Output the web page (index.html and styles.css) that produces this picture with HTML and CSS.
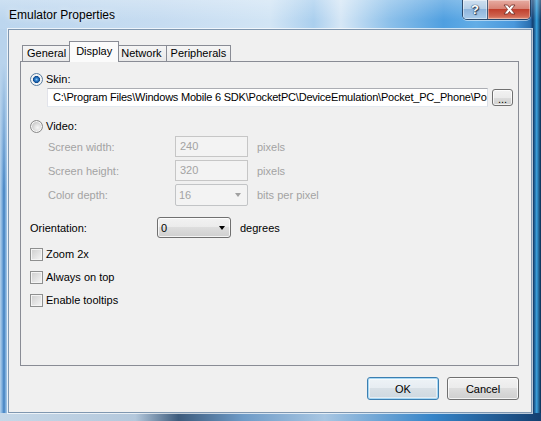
FILE: index.html
```html
<!DOCTYPE html>
<html>
<head>
<meta charset="utf-8">
<title>Emulator Properties</title>
<link rel="stylesheet" href="styles.css">
</head>
<body>
<div class="window">
  <div class="titlebar">
    <span class="title">Emulator Properties</span>
    <div class="caption">
      <span class="cap-help">?</span>
      <span class="cap-close">
        <svg width="13" height="11" viewBox="0 0 13 11"><path d="M1,1 H4.6 L6.5,3.5 L8.4,1 H12 L8.4,5.5 L12,10 H8.4 L6.5,7.5 L4.6,10 H1 L4.6,5.5 Z" fill="#fff" stroke="#6b2a22" stroke-width="0.8" stroke-linejoin="round"/></svg>
      </span>
    </div>
  </div>
  <div class="client">
    <div class="tabs">
      <span class="tab">General</span>
      <span class="tab active">Display</span>
      <span class="tab">Network</span>
      <span class="tab">Peripherals</span>
    </div>
    <div class="panel">
      <div class="row r-skin"><span class="radio checked"></span><span>Skin:</span></div>
      <div class="row r-path">
        <div class="textbox path">C:\Program Files\Windows Mobile 6 SDK\PocketPC\DeviceEmulation\Pocket_PC_Phone\Po</div>
        <span class="btn browse">...</span>
      </div>
      <div class="row r-video"><span class="radio"></span><span>Video:</span></div>
      <div class="row r-field disabled"><span class="lbl">Screen width:</span><span class="dbox">240</span><span class="unit">pixels</span></div>
      <div class="row r-field disabled"><span class="lbl">Screen height:</span><span class="dbox">320</span><span class="unit">pixels</span></div>
      <div class="row r-field disabled"><span class="lbl">Color depth:</span><span class="dcombo">16<span class="arrow grey"></span></span><span class="unit">bits per pixel</span></div>
      <div class="row r-orient"><span class="lbl">Orientation:</span><span class="combo">0<span class="arrow"></span></span><span class="unit">degrees</span></div>
      <div class="row r-check first"><span class="check"></span><span>Zoom 2x</span></div>
      <div class="row r-check"><span class="check"></span><span>Always on top</span></div>
      <div class="row r-check"><span class="check"></span><span>Enable tooltips</span></div>
    </div>
    <div class="buttons">
      <span class="btn dlg default">OK</span>
      <span class="btn dlg">Cancel</span>
    </div>
  </div>
</div>
</body>
</html>
```
FILE: styles.css
```css
* { box-sizing: border-box; }
html, body { margin: 0; padding: 0; }
body {
  width: 541px;
  height: 421px;
  overflow: hidden;
  font-family: "Liberation Sans", Arial, sans-serif;
  font-size: 11px;
  color: #000;
  background: #1d4e80;
}

.window {
  width: 541px;
  height: 421px;
  display: flex;
  flex-direction: column;
  background:
    linear-gradient(90deg, #c6d8e8 0%, #b4c8dc 25%, #3d5b7c 33%, #6f9cc8 45%, #a8c6e2 60%, #3584c8 80%, #143f70 100%) left bottom / 100% 8px no-repeat,
    linear-gradient(180deg, #b8d3ec 0%, #b8d3ec 15%, rgba(184,211,236,0) 45%) left top / 8px 100% no-repeat,
    linear-gradient(90deg, #b3d0eb 0px, #7fb0de 2px, #3f7fc0 4px, #8bb8e2 6px, #bcd6ee 8px, #bcd6ee 60%, #5ea6e0 90%, #2d78bc 98%, #0e3261 98.5%, #3aa0dc 99.2%, #0c2a50 100%);
}

/* title bar */
.titlebar {
  height: 29px;
  display: flex;
  align-items: flex-start;
  padding: 0 10px 0 9px;
  background:
    linear-gradient(180deg, rgba(255,255,255,0.25), rgba(255,255,255,0) 70%),
    linear-gradient(90deg, #bcd6ee 0%, #c6dcf1 30%, #d2e5f5 50%, #aacfee 58%, #d6e7f6 63%, #8cc0ea 72%, #4f9fe0 82%, #63ade6 88%, #4a98dc 95%, #2a6fb0 98%, #123d6e 98.5%, #34a0dc 99.2%, #0f2f58 100%);
}
.title {
  font-size: 12px;
  line-height: 14px;
  margin-top: 8px;
  text-shadow: 0 0 6px rgba(255,255,255,0.9);
}
.caption {
  margin-left: auto;
  display: flex;
  height: 20px;
  border: 1px solid rgba(28,48,78,0.8);
  border-top: none;
  border-radius: 0 0 5px 5px;
  overflow: hidden;
  box-shadow: 0 1px 0 rgba(255,255,255,0.5);
}
.cap-help {
  width: 25px;
  display: flex;
  align-items: center;
  justify-content: center;
  border-right: 1px solid rgba(28,48,78,0.7);
  background: linear-gradient(180deg, #cfe0f0 0%, #b5cfe8 45%, #8fb5dc 50%, #a9cbea 100%);
  box-shadow: inset 0 0 0 1px rgba(255,255,255,0.45);
  color: #fff;
  font-weight: bold;
  font-size: 13px;
  line-height: 13px;
  text-shadow: 0 0 1px #243a56, 0 0 1px #243a56, 1px 1px 1px #243a56;
}
.cap-close {
  width: 42px;
  display: flex;
  align-items: center;
  justify-content: center;
  background: linear-gradient(180deg, #e7aca2 0%, #d88476 45%, #c1402e 50%, #cf6450 85%, #e08f78 100%);
  box-shadow: inset 0 0 0 1px rgba(255,255,255,0.35);
}

/* client area */
.client {
  flex: 1;
  margin: 0 9px 8px 8px;
  background: #f0f0f0;
  border: 1px solid #7f97b0;
  box-shadow: 0 0 0 1px rgba(255,255,255,0.7);
  padding: 11px 12px 0 11px;
  display: flex;
  flex-direction: column;
}

/* tabs */
.tabs {
  display: flex;
  align-items: flex-end;
  height: 21px;
  padding-left: 2px;
  margin-bottom: -1px;
  position: relative;
  z-index: 1;
}
.tab {
  height: 17px;
  border: 1px solid #898c95;
  padding: 0 4px;
  line-height: 15px;
  background: linear-gradient(180deg, #f5f5f5 0%, #e9e9e9 100%);
  margin-left: -1px;
}
.tab:first-child { margin-left: 0; }
.tab.active {
  height: 21px;
  border-bottom: none;
  background: #fbfbfb;
  margin: 0 -2px 0 -2px;
  padding: 0 6px;
  line-height: 19px;
  position: relative;
  z-index: 2;
}

/* panel */
.panel {
  height: 305px;
  border: 1px solid #898c95;
  background: #f0f0f0;
  padding: 10px 0 0 9px;
}
.row {
  display: flex;
  align-items: center;
  white-space: nowrap;
}
.r-skin, .r-video, .r-check { height: 14px; }
.r-path { height: 19px; margin-top: 2px; padding-left: 17px; }
.r-video { margin-top: 12px; }
.r-field { height: 21px; margin-top: 3px; padding-left: 18px; }
.r-orient { height: 21px; margin-top: 12px; }
.r-check { margin-top: 9px; }
.r-check.first { margin-top: 9px; }
.disabled { color: #a3a3a3; }

.lbl { width: 127px; }
.unit { margin-left: 9px; }

.radio {
  width: 13px;
  height: 13px;
  border-radius: 50%;
  border: 1px solid #8a8a8a;
  margin-right: 3px;
  background: radial-gradient(circle at 60% 60%, #f6f6f6 0, #e2e2e2 3px, #c9c9c9 6px);
  box-shadow: inset 0 0 0 1px #f8f8f8;
}
.radio.checked {
  border-color: #5a7ea0;
  background: radial-gradient(circle at 50% 50%, #8fc8f4 0, #2f7fcc 1.5px, #0e4a8e 3.2px, #f2f2f2 3.8px, #e0e0e0 6px);
}

.check {
  width: 13px;
  height: 13px;
  border: 1px solid #8e8f8f;
  margin-right: 3px;
  background: linear-gradient(135deg, #cdcdcd 0%, #f6f6f6 100%);
  box-shadow: inset 0 0 0 1px #f4f4f4;
}

.textbox.path {
  width: 441px;
  height: 19px;
  background: #fff;
  border: 1px solid;
  border-color: #abadb3 #dbdfe6 #e3e9ef #e2e3ea;
  padding: 0 0 0 5px;
  line-height: 17px;
  letter-spacing: -0.21px;
  overflow: hidden;
  white-space: nowrap;
}

.btn {
  border: 1px solid #707070;
  border-radius: 3px;
  background: linear-gradient(180deg, #f2f2f2 0%, #ebebeb 50%, #dddddd 50%, #cfcfcf 100%);
  box-shadow: inset 0 0 0 1px rgba(255,255,255,0.75);
  display: flex;
  align-items: center;
  justify-content: center;
}
.browse {
  width: 21px;
  height: 17px;
  margin-left: 4px;
  font-size: 11px;
  line-height: 11px;
  padding-top: 3px;
}

.dbox {
  width: 73px;
  height: 21px;
  border: 1px solid #c6c6c6;
  background: #f3f3f3;
  padding-left: 4px;
  line-height: 19px;
}
.dcombo {
  width: 73px;
  height: 22px;
  border: 1px solid #c2c4c6;
  border-radius: 2px;
  background: #f3f3f3;
  padding: 0 6px 0 3px;
  display: flex;
  align-items: center;
}
.combo {
  width: 74px;
  height: 21px;
  border: 1px solid #707070;
  border-radius: 3px;
  background: linear-gradient(180deg, #f2f2f2 0%, #ebebeb 50%, #dddddd 50%, #cfcfcf 100%);
  box-shadow: inset 0 0 0 1px rgba(255,255,255,0.75);
  padding: 0 5px 0 3px;
  display: flex;
  align-items: center;
}
.arrow {
  margin-left: auto;
  width: 0;
  height: 0;
  border-left: 3.5px solid transparent;
  border-right: 3.5px solid transparent;
  border-top: 4px solid #000;
}
.arrow.grey { border-top-color: #a0a0a0; }

/* dialog buttons */
.buttons {
  display: flex;
  justify-content: flex-end;
  gap: 8px;
  margin-top: 11px;
}
.dlg {
  width: 72px;
  height: 23px;
}
.dlg.default {
  border-color: #3c7fb1;
  background: linear-gradient(180deg, #eef3f7 0%, #e6ecf1 50%, #d8e0e6 50%, #cdd8e0 100%);
  box-shadow: inset 0 0 0 1px #a8d8f4, inset 0 0 0 2px rgba(255,255,255,0.5);
}
```
